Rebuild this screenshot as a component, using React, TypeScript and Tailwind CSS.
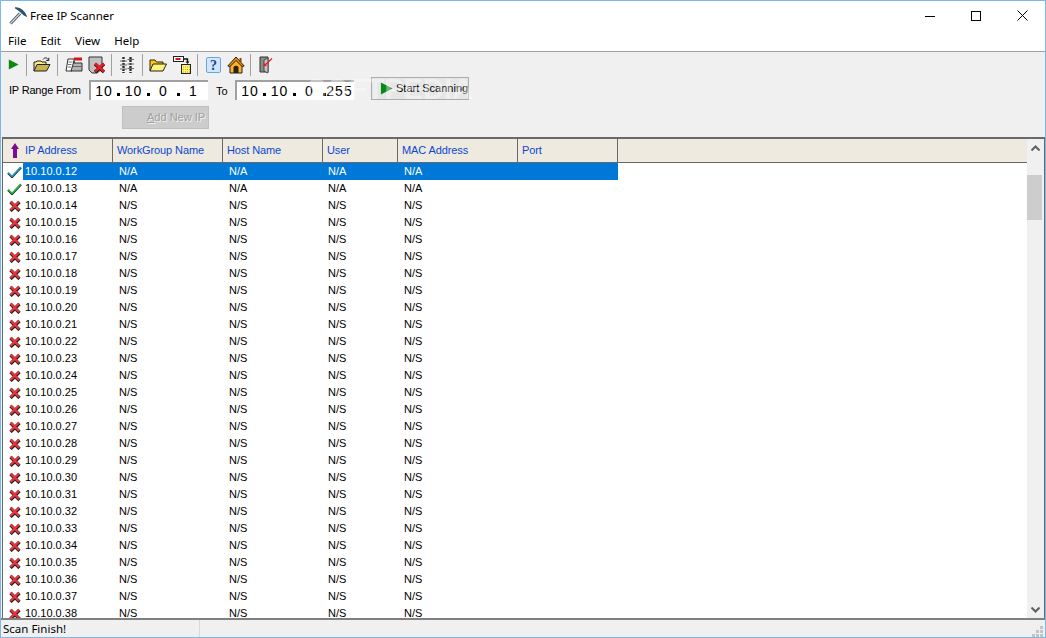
import React from "react";

const UI = "font-['Noto_Sans',sans-serif] text-[11.5px]";

const Pick = () => (
  <svg width="18" height="18" viewBox="0 0 18 18">
    <path d="M1.5 16.5 L11 6.5" stroke="#46525e" strokeWidth="3" />
    <path d="M1.5 16.5 L11 6.5" stroke="#c6d6e4" strokeWidth="1.2" />
    <path d="M6 0.8 C10.5 0.5 15.5 3 17.5 9.5 L14 7.5 L10.5 4 Z" fill="#24587c" stroke="#15384f" strokeWidth="0.7" />
  </svg>
);

const Play = ({size}: {size: number}) => (
  <svg width={size} height={size} viewBox="0 0 14 14">
    <path d="M1 0.5 L13.5 7 L1 13.5 Z" fill="#0a8a14" />
  </svg>
);

const OpenFolder = () => (
  <svg width="18" height="18" viewBox="0 0 18 18">
    <path d="M1 15 V6 H3 L4 5 H8 L9 6 H13 V8" fill="#f7e98e" stroke="#222" strokeWidth="1" />
    <path d="M1 15 L4 8.5 H17 L13.5 15 Z" fill="#c9b44a" stroke="#222" strokeWidth="1" />
    <path d="M10 3.5 C12 1 14 1.5 15.5 4 M15.8 1.8 V4.5 H13.2" fill="none" stroke="#222" strokeWidth="1" />
  </svg>
);

const Report = () => (
  <svg width="18" height="18" viewBox="0 0 18 18">
    <path d="M3 3 H9 V7 L7 15 H1 Z" fill="#fff" stroke="#333" strokeWidth="1" />
    <path d="M3.5 6 H7.5 M3 8.5 H6.5 M2.8 11 H6" stroke="#777" strokeWidth="1" />
    <rect x="9" y="1.5" width="8" height="3" fill="#d5141c" />
    <path d="M9 5 V7 H17 V15 H6 Z" fill="#b4b4b4" stroke="#333" strokeWidth="1" />
    <path d="M8 10.5 H17" stroke="#666" strokeWidth="1" />
  </svg>
);

const Delete = () => (
  <svg width="18" height="18" viewBox="0 0 18 18">
    <path d="M1 1 H14 V13 L9 17 H4 L1 14 Z" fill="#c0c0c0" stroke="#333" strokeWidth="1" />
    <path d="M7 8 L16 16 M16 8 L7 16" stroke="#111" strokeWidth="3.4" />
    <path d="M7 7.5 L16 15.5 M16 7.5 L7 15.5" stroke="#ee1c24" strokeWidth="2.4" />
  </svg>
);

const Columns = () => (
  <svg width="18" height="18" viewBox="0 0 18 18">
    <path d="M5.5 1 V17 M12.5 1 V17" stroke="#2e2e2e" strokeWidth="2.4" strokeDasharray="2 1" />
    <path d="M2 5 H9 M9.5 3.5 H16 M2 9 H9 M9.5 8 H16 M2 13 H9 M9.5 12.5 H16" stroke="#6a6a6a" strokeWidth="1.2" />
  </svg>
);

const Folder = () => (
  <svg width="18" height="18" viewBox="0 0 18 18">
    <path d="M1 15 V4 H6 L7.5 6 H14 V8" fill="#ffc90e" stroke="#222" strokeWidth="1" />
    <path d="M1 15 L4 8 H17.5 L14 15 Z" fill="#fff27a" stroke="#222" strokeWidth="1" />
  </svg>
);

const Export = () => (
  <svg width="18" height="18" viewBox="0 0 18 18">
    <rect x="0.5" y="0.5" width="10" height="5" fill="#fff" stroke="#222" />
    <rect x="2.5" y="2" width="5" height="2" fill="#d5141c" />
    <path d="M11 3 H14.5 V6" fill="none" stroke="#111" strokeWidth="1.4" />
    <path d="M12.5 5.5 H16.5 L14.5 8 Z" fill="#111" />
    <rect x="8.5" y="8.5" width="9" height="9" fill="#fff27a" stroke="#222" />
    <path d="M10 11 H17 M10 13.5 H17 M10 16 H17" stroke="#c9a800" strokeWidth="1" strokeDasharray="1 1" />
  </svg>
);

const Help = () => (
  <svg width="18" height="18" viewBox="0 0 18 18">
    <rect x="2.5" y="1.5" width="14" height="15" rx="1.5" fill="#cfe6fb" stroke="#6aa5dc" />
    <text x="9.5" y="14" textAnchor="middle" fontSize="14" fontWeight="700" fill="#1c3f94" fontFamily="Liberation Serif, serif">?</text>
  </svg>
);

const Home = () => (
  <svg width="18" height="18" viewBox="0 0 18 18">
    <path d="M3 9 V17 H15 V9 L9 3 Z" fill="#ffb52b" stroke="#222" strokeWidth="1" />
    <path d="M0.8 10 L9 1 L17.2 10 L15 10.5 L9 4.5 L3 10.5 Z" fill="#f08a00" stroke="#222" strokeWidth="1" />
    <rect x="12.5" y="2" width="2" height="4" fill="#8a4b00" />
    <path d="M6.5 17 V11.5 C6.5 9 11.5 9 11.5 11.5 V17 Z" fill="#2e2110" />
  </svg>
);

const Door = () => (
  <svg width="18" height="18" viewBox="0 0 18 18">
    <path d="M3 1 H11 V16 H3 Z" fill="#8c8c8c" stroke="#333" strokeWidth="1" />
    <path d="M7 4 L11 2 V17 L7 15 Z" fill="#c4c4c4" stroke="#333" strokeWidth="0.8" />
    <path d="M8 9 L15 2.5" stroke="#ee1c24" strokeWidth="1.3" />
    <path d="M6.5 10.5 L7.2 7 L10 9.7 Z" fill="#ee1c24" />
  </svg>
);

const Sep = ({className}: {className: string}) => (
  <div className={`h-[22px] w-px bg-[#a0a0a0] shrink-0 ${className}`} />
);

const Check = ({blue}: {blue?: boolean}) => (
  <svg width="15" height="12" viewBox="0 0 15 12">
    <path d="M1 7 L5 11 L14 1.5" fill="none" stroke="#1a2a2a" strokeWidth="2.2" />
    <path d="M1.4 7 L5 10.4 L13.6 1.5" fill="none" stroke={blue ? "#28a6d8" : "#22d03a"} strokeWidth="1.3" />
  </svg>
);

const Cross = () => (
  <svg width="12" height="12" viewBox="0 0 12 12">
    <path d="M1.5 2 L10.5 11 M10.5 2 L1.5 11" stroke="#222" strokeWidth="3.2" />
    <path d="M1.5 1.5 L10 10 M10 1.5 L1.5 10" stroke="#e8343a" strokeWidth="2.3" />
  </svg>
);

const SortUp = () => (
  <svg width="10" height="15" viewBox="0 0 10 15">
    <path d="M5 0 L9 6 H7 V15 H3 V6 H1 Z" fill="#7a0f8c" />
  </svg>
);

const Dot = () => <span className="w-[3px] h-[3px] bg-black mt-[6px] shrink-0" />;

const IpField = ({parts, className}: {parts: string[]; className: string}) => (
  <div className={`h-[20px] bg-white border-t-2 border-l-2 border-[#a0a0a0] flex items-center text-[14px] text-black tracking-[1px] ${className}`}>
    <span className="w-[26px] text-center">{parts[0]}</span>
    <Dot />
    <span className="w-[27px] text-center">{parts[1]}</span>
    <Dot />
    <span className="w-[27px] text-center">{parts[2]}</span>
    <Dot />
    <span className="w-[27px] text-center whitespace-nowrap">{parts[3]}</span>
  </div>
);

const HEAD = [
  {label: "WorkGroup Name", w: "w-[110px]"},
  {label: "Host Name", w: "w-[100px]"},
  {label: "User", w: "w-[75px]"},
  {label: "MAC Address", w: "w-[120px]"},
  {label: "Port", w: "w-[100px]"},
];

const ROWS = Array.from({length: 27}, (_, i) => 12 + i);

const Row = ({n}: {n: number}) => {
  const found = n < 14;
  const val = found ? "N/A" : "N/S";
  const selected = n === 12;
  return (
    <div className="flex h-[17px] shrink-0 items-center leading-[17px] text-black">
      <div className="w-[20px] flex justify-center shrink-0 pl-[3px]">
        {found ? <Check blue={selected} /> : <Cross />}
      </div>
      <div className={`flex ${selected ? "bg-[#0078d7] text-white" : ""}`}>
        <div className="w-[90px] pl-[2px]">10.10.0.{n}</div>
        <div className="w-[110px] pl-[6px]">{val}</div>
        <div className="w-[100px] pl-[6px]">{val}</div>
        <div className="w-[75px] pl-[5px]">{val}</div>
        <div className="w-[120px] pl-[6px]">{val}</div>
        <div className="w-[100px]" />
      </div>
    </div>
  );
};

export default function App() {
  return (
    <div className="relative w-[1046px] h-[638px] overflow-hidden flex flex-col bg-[#f0f0f0] border border-[#79b7ec] font-['Liberation_Sans',sans-serif] text-[11px]">
      {/* Title bar */}
      <div className="h-[29px] bg-white flex items-center shrink-0">
        <div className="ml-[8px]"><Pick /></div>
        <span className={`ml-[3px] text-black ${UI}`}>Free IP Scanner</span>
        <div className="ml-auto flex items-center">
          <svg width="10" height="10" viewBox="0 0 10 10" className="mr-[36px]"><path d="M0 5.5 H10" stroke="#000" /></svg>
          <svg width="10" height="10" viewBox="0 0 10 10" className="mr-[36px]"><rect x="0.5" y="0.5" width="9" height="9" fill="none" stroke="#000" /></svg>
          <svg width="11" height="11" viewBox="0 0 11 11" className="mr-[17px]"><path d="M0.5 0.5 L10.5 10.5 M10.5 0.5 L0.5 10.5" stroke="#000" /></svg>
        </div>
      </div>

      {/* Menu */}
      <div className={`h-[21px] bg-white flex items-center shrink-0 text-black border-b border-[#a0a0a0] box-content ${UI}`}>
        <span className="ml-[7px]">File</span>
        <span className="ml-[14px]">Edit</span>
        <span className="ml-[14px]">View</span>
        <span className="ml-[14px]">Help</span>
      </div>

      {/* Toolbar */}
      <div className="h-[25px] flex items-center shrink-0">
        <div className="ml-[7px] w-[11px]"><Play size={11} /></div>
        <Sep className="ml-[7px]" />
        <div className="ml-[6px]"><OpenFolder /></div>
        <Sep className="ml-[6px]" />
        <div className="ml-[7px]"><Report /></div>
        <div className="ml-[5px]"><Delete /></div>
        <Sep className="ml-[5px]" />
        <div className="ml-[6px]"><Columns /></div>
        <Sep className="ml-[6px]" />
        <div className="ml-[6px]"><Folder /></div>
        <div className="ml-[6px]"><Export /></div>
        <Sep className="ml-[6px]" />
        <div className="ml-[6px]"><Help /></div>
        <div className="ml-[5px]"><Home /></div>
        <Sep className="ml-[5px]" />
        <div className="ml-[6px]"><Door /></div>
      </div>

      {/* IP range */}
      <div className="h-[26px] flex items-center shrink-0 text-black">
        <span className="ml-[8px] w-[80px] whitespace-nowrap tracking-[-0.2px]">IP Range From</span>
        <IpField parts={["10", "10", "0", "1"]} className="w-[119px]" />
        <span className="ml-[8px] w-[19px] mt-[3px]">To</span>
        <IpField parts={["10", "10", "0", "255"]} className="w-[119px]" />
        <button className="ml-[17px] mb-[3px] w-[98px] h-[23px] flex items-center bg-[#e6e6e6] border border-[#adadad] whitespace-nowrap">
          <span className="ml-[8px] mr-[3px]"><Play size={13} /></span>
          Start Scanning
        </button>
      </div>

      {/* Add new IP */}
      <div className="h-[34px] pt-[3px] shrink-0">
        <button className="ml-[121px] w-[87px] h-[23px] bg-[#cccccc] border border-[#bfbfbf] text-[#a0a0a0] text-left pl-[24px] whitespace-nowrap [text-shadow:1px_1px_0_#f0f0f0]">
          <span className="underline">A</span>dd New IP
        </button>
      </div>

      {/* List */}
      <div className="flex-1 min-h-0 flex ml-[1px] border-t-2 border-l border-r border-[#696969] bg-white">
        <div className="flex-1 min-w-0 flex flex-col overflow-hidden">
          <div className="flex h-[24px] shrink-0 bg-[#eeeadf] border-b border-[#696969] text-[#0a48d0] items-center tracking-[-0.1px]">
            <div className="w-[110px] h-full border-r border-[#696969] flex items-center">
              <span className="ml-[7px] mr-[5px]"><SortUp /></span>
              IP Address
            </div>
            {HEAD.map((h) => (
              <div key={h.label} className={`${h.w} h-full border-r border-[#696969] flex items-center pl-[4px]`}>
                {h.label}
              </div>
            ))}
          </div>
          <div className="flex-1 min-h-0 overflow-hidden flex flex-col">
            {ROWS.map((n) => (
              <Row key={n} n={n} />
            ))}
          </div>
        </div>

        {/* Scrollbar */}
        <div className="w-[17px] shrink-0 bg-[#f0f0f0] flex flex-col">
          <div className="h-[17px] flex items-center justify-center">
            <svg width="9" height="6" viewBox="0 0 9 6"><path d="M0.5 5.5 L4.5 1.5 L8.5 5.5" fill="none" stroke="#606060" strokeWidth="2" /></svg>
          </div>
          <div className="mt-[19px] h-[45px] w-[15px] bg-[#cdcdcd]" />
          <div className="mt-auto h-[17px] flex items-center justify-center">
            <svg width="9" height="6" viewBox="0 0 9 6"><path d="M0.5 0.5 L4.5 4.5 L8.5 0.5" fill="none" stroke="#606060" strokeWidth="2" /></svg>
          </div>
        </div>
      </div>

      {/* Status bar */}
      <div className={`h-[19px] shrink-0 flex items-center border-t-2 border-[#808080] text-black relative ${UI}`}>
        <div className="w-[199px] h-full pl-[2px] border-r border-[#d9d9d9] leading-[17px]">Scan Finish!</div>
        <svg width="12" height="12" viewBox="0 0 12 12" className="absolute right-[1px] bottom-0">
          <path d="M8 1h3v3H8z M4 5h3v3H4z M8 5h3v3H8z M0 9h3v3H0z M4 9h3v3H4z M8 9h3v3H8z" fill="#c4c4c4" />
        </svg>
      </div>

      {/* Watermark */}
      <div className="absolute left-[306px] top-[71px] text-[29px] leading-[34px] font-bold text-white/40 pointer-events-none">
        SOFTPEDIA
      </div>
    </div>
  );
}
